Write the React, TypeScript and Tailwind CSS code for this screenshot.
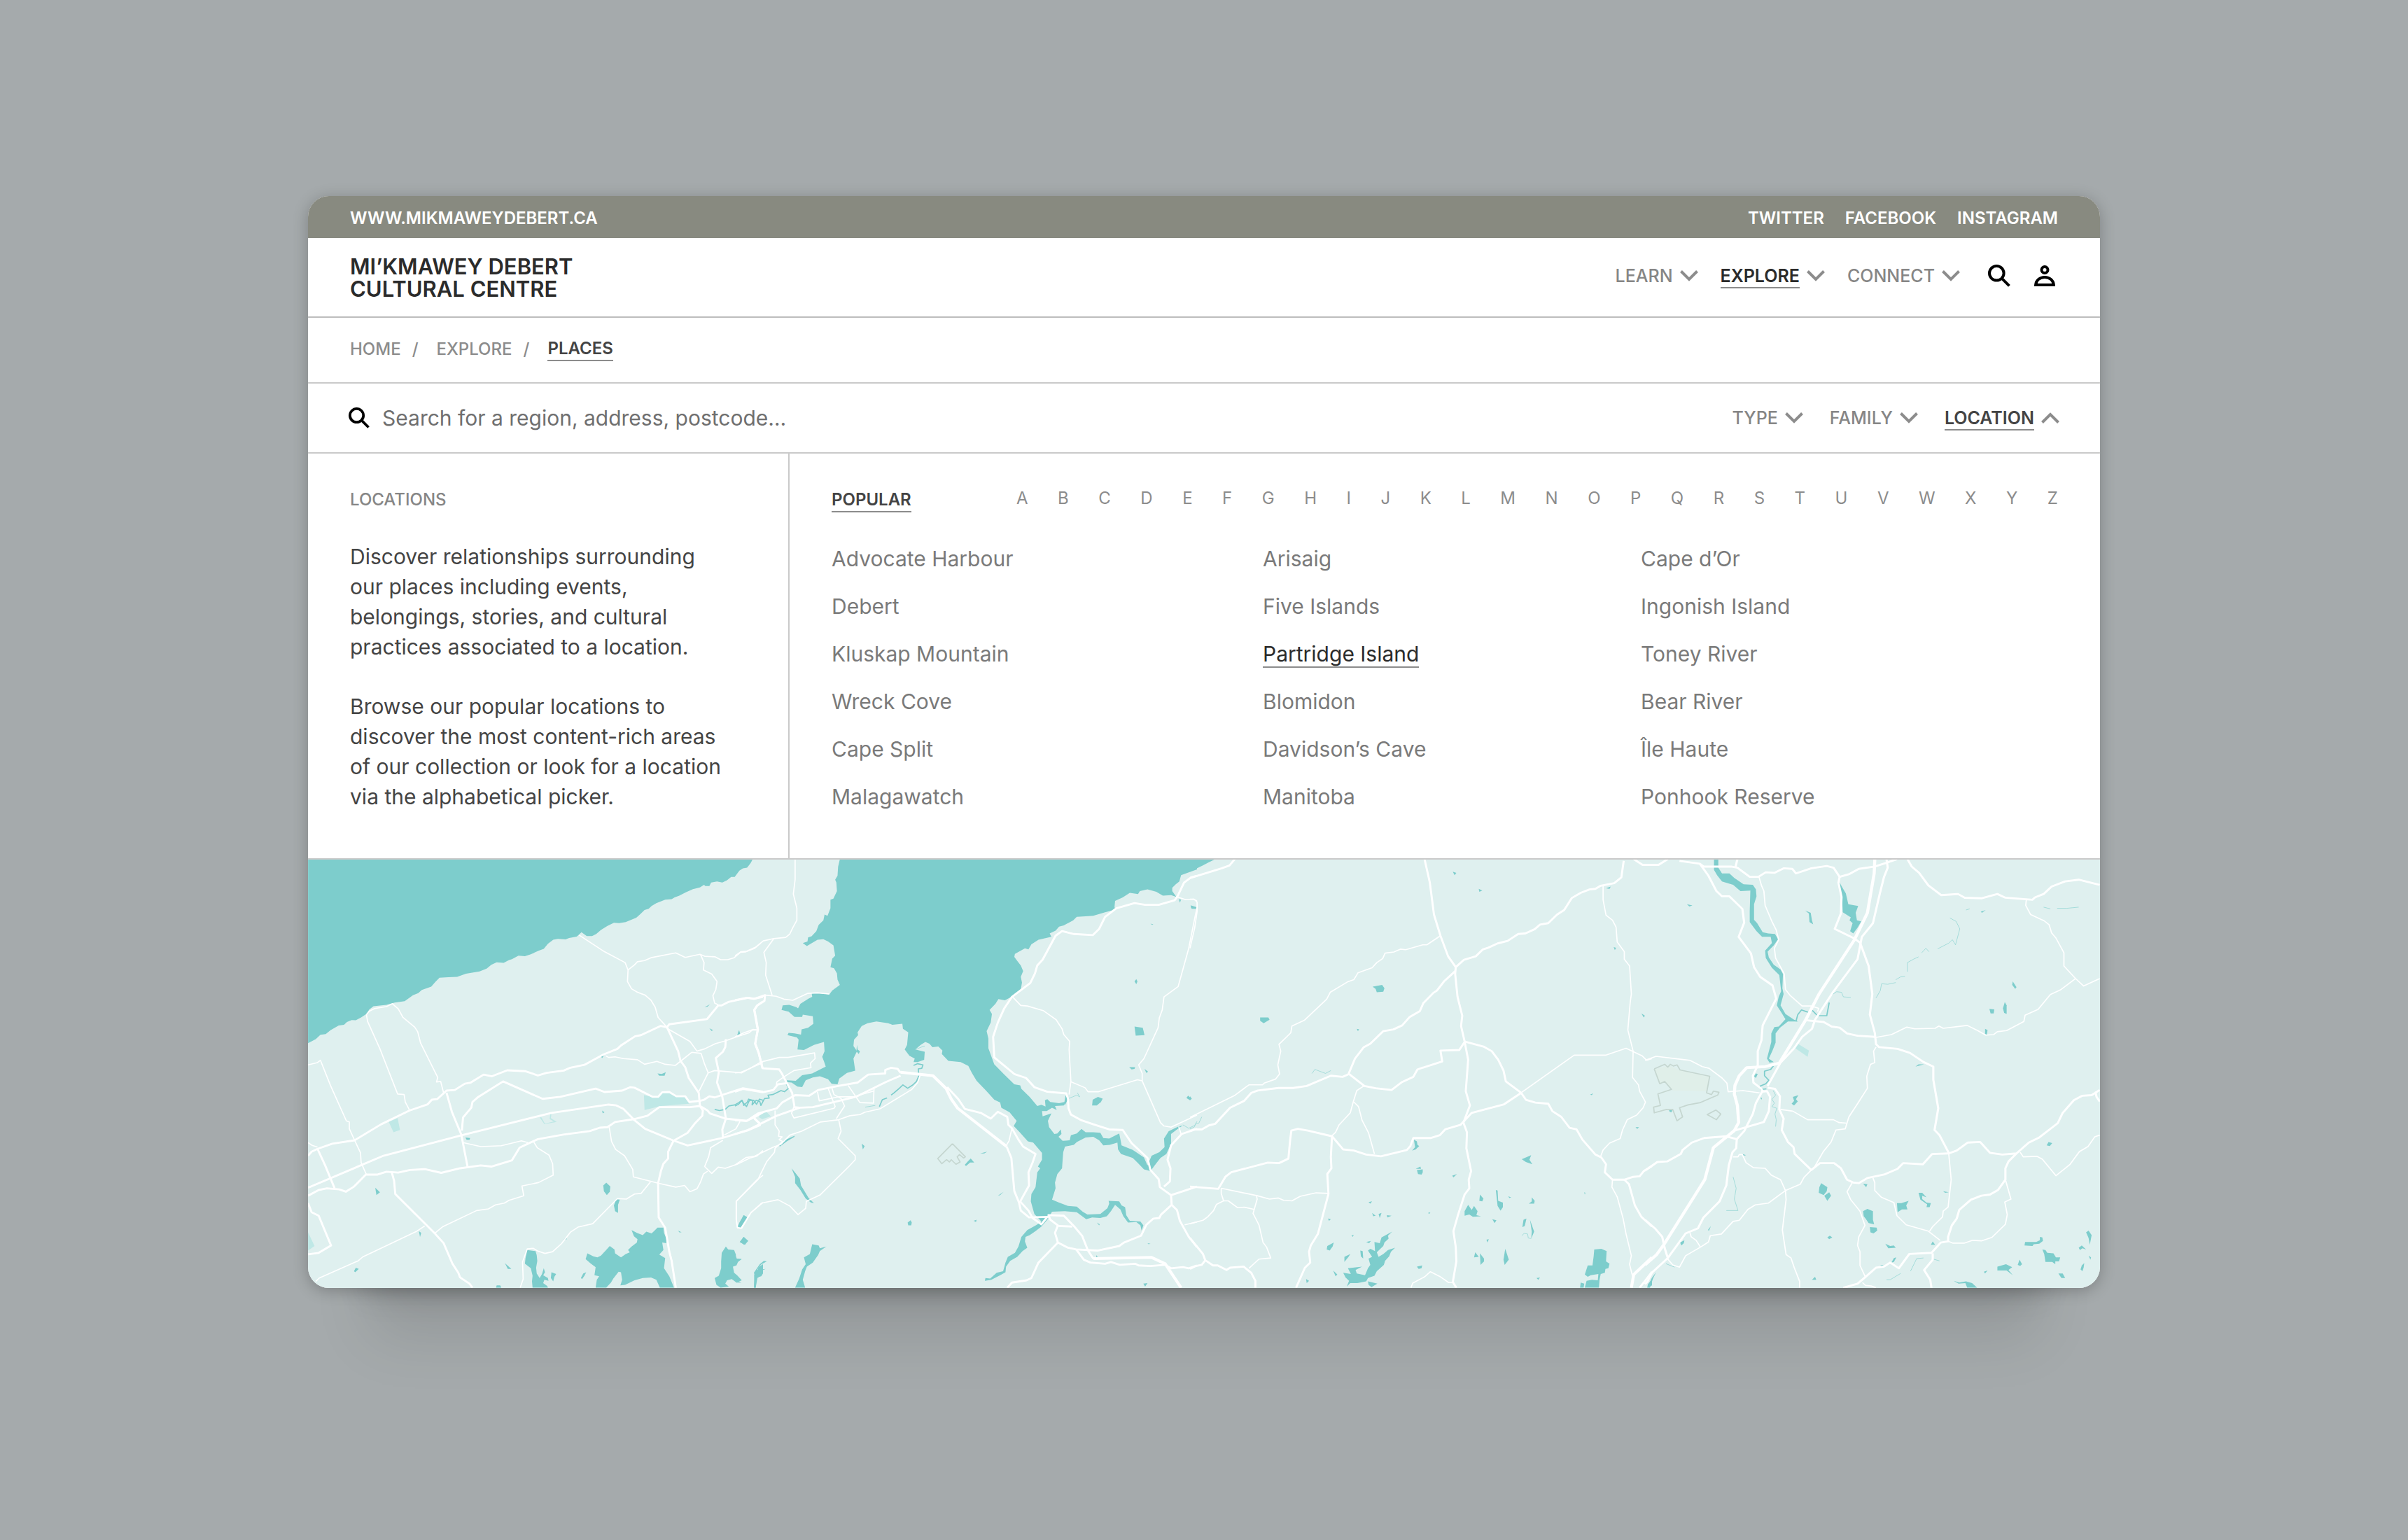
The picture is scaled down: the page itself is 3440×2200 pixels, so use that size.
import React from "react";

type Tile = {
  transform: string;
  water: string[];
  pale?: string[];
  fields?: string[];
  streams?: string[];
  creeks?: string[];
  outlines?: string[];
  thin: string[];
  mid: string[];
  wide?: string[];
};

/* Map sheets, west to east. Each one is drawn in its own survey units. */
const tiles: Tile[] = [
  {
    transform: "translate(430 1220) scale(0.42091 0.40816)",
    water: [
      "24,18 1533,18 1526,32 1514,48 1500,50 1488,58 1472,80 1460,80 1446,92 1430,100 1412,96 1392,100 1386,112 1372,112 1368,108 1354,117 1330,123 1306,134 1284,146 1268,152 1258,158 1236,160 1206,172 1190,182 1180,192 1166,196 1152,210 1138,223 1102,238 1080,242 1062,241 1040,252 1018,266 1002,280 988,287 970,287 952,274 936,289 910,294 898,299 872,297 856,300 838,314 824,332 806,339 780,351 760,358 738,356 716,368 706,371 688,381 664,379 646,388 630,401 606,411 560,419 530,430 500,431 470,433 456,448 442,464 410,476 398,487 380,494 352,515 318,520 290,528 246,533 232,544 222,560 204,572 186,582 172,581 156,588 146,598 128,600 100,617 84,630 66,633 50,648 24,662",
      "1122,1316 1140,1326 1160,1334 1172,1322 1190,1328 1200,1318 1210,1308 1230,1308 1232,1326 1240,1346 1240,1362 1226,1360 1230,1386 1216,1402 1236,1414 1232,1450 1250,1478 1266,1518 1218,1518 1206,1490 1188,1482 1160,1484 1132,1492 1116,1500 1100,1508 1084,1510 1090,1490 1086,1464 1078,1462 1060,1486 1052,1500 1036,1518 1000,1518 1004,1490 1012,1478 996,1474 1000,1446 984,1434 966,1418 972,1398 992,1408 1006,1412 1018,1406 1034,1388 1048,1372 1064,1384 1066,1398 1086,1412 1102,1400 1116,1394 1110,1386 1122,1374 1140,1360 1142,1348 1130,1338",
      "768,1386 796,1390 800,1404 802,1424 798,1448 800,1468 810,1484 818,1470 824,1450 828,1464 822,1474 838,1484 840,1494 826,1490 822,1502 836,1512 838,1518 786,1518 784,1496 786,1476 780,1450 760,1434 762,1414",
      "850,1464 866,1470 860,1480 856,1496 848,1484",
      "1442,1374 1450,1384 1470,1386 1476,1402 1476,1416 1496,1418 1484,1426 1478,1440 1466,1444 1470,1466 1480,1474 1496,1492 1478,1500 1462,1488 1446,1492 1440,1504 1452,1514 1424,1518 1410,1508 1404,1484 1418,1476 1426,1450 1426,1426 1428,1396",
      "1036,1150 1050,1164 1048,1182 1038,1194 1028,1180 1026,1160",
      "1070,1208 1082,1210 1076,1228 1076,1256 1066,1250 1062,1230",
      "1502,1264 1516,1272 1508,1286 1492,1308 1480,1308 1490,1288",
      "1502,1340 1518,1354 1504,1368 1490,1358",
      "1568,1436 1552,1446 1550,1464 1538,1472 1538,1518 1544,1518 1546,1482 1562,1478 1568,1468",
      "252,1168 268,1184 256,1194", "400,1320 408,1326 404,1340", "186,1448 196,1452 184,1464 180,1460",
      "692,1432 714,1452 702,1452", "950,1484 958,1468 968,1464 962,1476 954,1488", "664,1510 676,1510 680,1518 662,1518",
      "1210,768 1224,770 1238,764 1234,776 1216,776", "1370,536 1388,526 1380,534", "1386,610 1398,616 1394,620",
      "1480,636 1486,618 1490,634", "558,992 574,994 572,1000 562,1000", "1022,898 1030,904 1024,908", "1018,708 1028,706 1022,714",
      "890,1352 900,1342 902,1348", "1280,1318 1292,1324 1284,1324",
    ],
    pale: [
      "298,938 328,924 336,966 314,974", "1164,844 1204,852 1230,832 1256,836 1274,850 1300,848 1318,874 1222,882 1166,896", "24,1324 46,1372 24,1388",
      "810,922 826,946 868,938 848,924 850,910 846,910 844,928 858,936 828,944 816,922",
    ],
    streams: ["1404,894 1420,898 1440,894 1452,882 1472,878 1486,870 1496,862 1502,872 1512,884 1522,862 1536,862 1546,876 1556,858 1568,862"],
    thin: [
      "944,284 1030,342 1100,380 1110,406 1108,446 1122,472 1142,484 1168,494 1188,512 1202,536 1212,572 1242,606",
      "1110,406 1132,388 1142,377 1166,373 1188,363 1272,346 1304,362 1354,351 1370,358 1406,360 1424,370 1448,370 1470,363 1492,344 1508,343 1540,330 1560,312",
      "1356,352 1368,380 1366,406 1394,420 1412,446 1408,474 1398,496 1404,522 1416,528",
      "24,738 56,730 66,722 100,810 154,934 164,938 164,962 182,1002 202,1046 204,1080 222,1122",
      "222,562 232,550 250,541 290,534 310,524 330,542 346,572 386,606 396,622 406,662 464,782 460,798 474,796 484,836 490,836",
      "222,562 226,586 268,682 328,840 350,842 354,868 368,896",
      "24,1010 38,1020 56,1026", "550,1010 610,1024 680,1021 748,1004 770,1010",
      "790,1008 802,1028 842,1054 854,1084 856,1124 806,1150 750,1162 756,1196 706,1212 690,1222 660,1228 636,1242 596,1248 482,1304 456,1326",
      "420,1302 390,1322 210,1410 194,1424 62,1484 50,1496",
      "1034,706 1044,712 1066,710 1094,716 1142,720 1166,736 1208,726 1236,736 1270,740 1290,724 1326,694 1358,698 1370,736 1382,766 1404,758 1496,766 1520,752 1568,730",
      "1242,610 1320,656 1344,690 1370,682 1406,664 1440,654 1478,640 1520,626 1534,614 1550,616",
      "1382,766 1350,832", "1490,936 1476,962 1436,984",
      "1046,956 1054,1006 1068,1034 1098,1056 1126,1104 1128,1130 1212,1152 1272,1166 1302,1160 1320,1182 1344,1172 1356,1148 1366,1120 1380,1110",
      "1432,1002 1390,1028 1384,1058 1370,1094 1394,1118 1416,1096 1440,1100 1480,1086 1524,1064 1546,1058 1568,1038",
      "1186,1148 1154,1188 1132,1190 1104,1208 1074,1206 990,1294 940,1306 914,1324 884,1364 854,1392 828,1398 804,1390 788,1380 768,1382 752,1428 754,1488 744,1518",
      "1568,1124 1548,1140 1478,1214 1478,1282 1482,1308 1496,1310 1528,1254 1568,1220",
    ],
    mid: [
      "24,1056 36,1042 56,1032 106,1014 182,1002 272,946 368,898 430,876 444,860 462,858 494,828 522,826 556,804 576,800 620,772 648,778 700,757 760,760 804,775 834,766 892,758 914,748 962,738 1026,702 1074,682 1086,670 1134,638 1154,634 1220,602 1242,606 1250,596 1378,578 1416,530 1428,530 1450,518 1518,503 1536,507 1568,500",
      "24,1168 280,1056 540,986 850,906 1044,877 1070,880 1094,892 1130,930 1168,962 1262,1002 1312,1020 1430,994 1520,966 1560,948",
      "546,968 550,922 578,888 582,868 602,850 686,796 820,857 880,850 1000,821 1030,833 1090,828 1118,816 1132,818 1194,850 1212,850 1226,834 1250,833 1274,848 1304,848 1318,868 1354,864 1368,860 1386,848 1404,852 1500,820 1568,832",
      "24,1196 60,1176 88,1170 130,1174 152,1182 180,1164 220,1122 260,1122 290,1112 330,1115 370,1106 420,1103 476,1116 540,1100 610,1090 646,1094 716,1072 742,1028 770,1014 804,998 890,982 980,970 1014,958 1040,956 1066,938 1130,928 1176,916 1216,886 1320,886 1354,882 1380,898 1388,908 1440,926 1512,934 1538,922 1568,904",
      "1538,924 1560,946",
      "56,1032 82,1090 114,1170", "494,836 512,902 544,982 566,1098",
      "308,1114 316,1144 320,1190 456,1330 484,1362 514,1434 534,1466 540,1482 572,1504 582,1518",
      "1242,606 1280,690 1288,724 1304,746 1316,784 1350,836 1354,882 1364,898 1362,916 1336,944 1312,976 1264,1004 1246,1042 1246,1066 1230,1084 1222,1108 1212,1152 1214,1272 1236,1308 1250,1392 1258,1424 1272,1518",
      "1442,648 1440,676 1432,692 1408,714 1418,764 1412,800 1430,850 1442,926 1430,964 1432,994",
      "1568,516 1548,530 1538,546 1550,614 1542,664 1554,696 1566,750",
      "24,1222 36,1254 60,1266 102,1370 60,1396 24,1401",
    ],
  },
  {
    transform: "translate(1050 1220) scale(0.42091 0.40816)",
    water: [
      "0,18 60,18 46,40 34,48 18,50 4,66 0,72",
      "356,18 1568,18 1568,54 1514,74 1508,96 1496,106 1484,118 1484,130 1498,150 1480,144 1452,146 1430,132 1400,124 1374,130 1368,140 1340,136 1316,152 1290,164 1288,186 1292,194 1256,204 1216,216 1190,218 1160,220 1148,232 1116,250 1100,254 1088,268 1068,278 1074,290 1030,300 1006,316 996,334 984,330 950,350 948,360 958,374 970,390 978,410 970,430 974,450 970,474 942,498 916,512 894,508 884,524 864,546 872,560 868,590 854,620 860,646 860,680 880,736 912,770 948,806 968,810 972,822 1000,850 1026,882 1040,878 1054,884 1052,862 1060,858 1070,868 1100,872 1118,868 1122,846 1132,856 1116,880 1086,882 1092,896 1076,888 1058,900 1042,900 1044,918 1074,908 1062,934 1066,956 1084,980 1094,978 1106,964 1108,980 1098,990 1112,1004 1136,1002 1140,984 1160,978 1176,962 1190,974 1216,974 1240,976 1250,994 1270,996 1304,978 1308,998 1312,1020 1350,1036 1388,1062 1400,1090 1414,1056 1440,1044 1458,1026 1456,996 1472,970 1504,954 1520,950 1500,964 1480,980 1480,1014 1464,1050 1444,1064 1430,1082 1410,1110 1388,1104 1368,1082 1350,1064 1310,1050 1300,1034 1298,1010 1272,1018 1250,1020 1236,1002 1216,990 1190,992 1160,1008 1150,1018 1120,1024 1114,1044 1112,1070 1110,1100 1094,1120 1086,1150 1088,1170 1076,1210 1100,1220 1130,1232 1160,1234 1180,1252 1196,1262 1240,1260 1264,1240 1270,1224 1268,1214 1304,1216 1312,1230 1324,1236 1328,1264 1340,1284 1376,1286 1386,1300 1380,1318 1376,1300 1362,1288 1334,1290 1318,1268 1308,1244 1290,1228 1276,1250 1262,1268 1240,1274 1212,1272 1192,1278 1160,1254 1120,1250 1076,1252 1060,1280 1040,1304 1020,1320 1000,1334 986,1340 984,1356 992,1378 976,1390 958,1410 934,1424 920,1444 918,1464 900,1474 870,1490 848,1494 850,1484 866,1486 888,1466 910,1460 918,1430 926,1410 950,1396 962,1374 972,1340 992,1316 1024,1298 1040,1286 1016,1260 1004,1216 1006,1190 1020,1166 1026,1114 1036,1100 1028,1094 1042,1070 1042,1046 1012,1010 994,1006 968,976 946,952 956,934 932,904 904,888 900,870 880,860 852,828 820,794 804,766 792,742 766,728 724,724 702,700 704,688 690,674 670,676 660,664 646,658 630,668 612,684 644,692 642,720 620,728 606,728 610,716 592,706 576,684 584,668 588,624 570,612 568,594 534,598 520,592 480,586 450,592 430,602 416,624 418,634 404,650 402,672 414,690 402,716 408,758 380,766 354,786 348,806 328,804 316,788 288,778 264,782 240,792 228,816 212,814 192,800 172,798 176,792 206,794 228,774 262,768 308,744 302,726 296,710 304,690 302,658 268,668 234,686 212,684 216,650 210,642 178,634 182,626 202,628 224,632 226,614 248,608 266,594 264,568 230,562 228,570 202,570 182,552 158,546 162,530 184,528 208,536 214,540 222,524 250,506 262,500 260,486 280,486 320,492 330,478 356,458 348,440 346,418 336,400 324,396 330,366 340,356 334,320 316,306 300,298 280,300 244,322 230,312 246,306 248,292 260,288 276,270 284,248 300,232 304,212 314,216 324,190 324,160 334,156 346,130 344,100 340,90 348,76 350,44",
      "1122,846 1128,842 1130,856 1120,880", "414,668 416,684 424,690 420,700 412,690",
      "1356,604 1384,608 1390,634 1360,636", "1214,860 1232,850 1248,856 1242,868 1228,880 1212,880", "1356,446 1362,438 1366,446 1362,456",
      "1338,746 1358,746 1356,752 1346,754", "1390,752 1402,762 1396,766", "1548,180 1566,186 1564,192 1550,192",
      "1532,854 1538,846 1550,856 1544,862", "1506,158 1514,160 1510,170", "192,1100 206,1118 220,1136 224,1160 250,1204 268,1222 258,1220 240,1206 222,1176 204,1152 204,1130",
      "150,1020 172,1000 202,986 202,990 176,1006 152,1024", "430,1014 440,1022 434,1034", "780,1088 790,1076 800,1066 812,1080 798,1080 784,1092",
      "832,1048 856,1042 846,1048", "892,1196 912,1182 900,1194", "586,1290 596,1282 600,1290 598,1300 588,1300", "810,1284 820,1280 818,1288",
      "262,1366 284,1370 288,1380 310,1374 288,1390 282,1404 264,1430 244,1444 238,1460 230,1490 238,1518 204,1518 218,1486 228,1454 240,1436 234,1412 254,1400",
      "108,1426 90,1436 80,1446 76,1456 104,1452 86,1460 90,1474 76,1484 70,1518 64,1518 68,1476 64,1466 84,1436 98,1424",
      "30,1264 42,1272 34,1288 20,1308 8,1308 16,1288", "30,1340 44,1354 34,1368 16,1358", "0,1400 6,1416 22,1418 10,1428 0,1424", "0,1490 22,1500 4,1500",
      "8,636 14,616 18,632", "1386,1504 1400,1502 1392,1514", "1400,1362 1410,1364 1404,1366", "1226,1404 1232,1412 1226,1414", "1228,1290 1238,1296 1236,1300", "1410,244 1420,246 1416,248", "910,576 922,576",
    ],
    pale: ["84,908 104,900 122,918 92,928 82,922"],
    streams: [
      "0,882 12,876 24,862 30,880 42,868 46,858 60,862 58,878 72,862 84,866 88,880 100,856 116,854 112,844 128,842 144,834 156,828 168,832 182,820 172,800",
      "606,740 620,734 638,738 634,750 622,752 624,776 616,796 604,808 586,820 570,808 558,820 540,836 530,844", "516,854 500,860 490,884",
    ],
    creeks: ["442,886 476,880", "1132,856 1146,850 1160,844 1170,850 1162,836", "1520,948 1540,960 1560,950 1568,936", "614,684 632,676 644,672"],
    outlines: ["738,1014 688,1066 702,1084 718,1070 728,1078 734,1070 750,1086 764,1078 754,1060 762,1052 776,1064 782,1060 738,1014"],
    thin: [
      "204,18 204,90 198,140 210,190 210,232 196,258 186,280 172,292 132,296 96,304 70,326 40,340 20,342 0,356",
      "132,296 98,344 106,380 104,424 126,494", "104,494 140,498 166,508 196,512 246,488 280,486 320,490",
      "0,766 20,764 48,752 88,728 150,712 180,712 270,696 272,716 256,732 258,748 200,758 166,780 142,798 140,812",
      "0,640 30,626 56,616 76,616", "200,884 192,908 200,924 336,890 340,884 316,820",
      "280,832 286,864 350,850 400,850 470,830", "328,816 336,842 360,856 372,882 344,926", "384,810 424,870 470,872 472,816",
      "0,1088 38,1062 66,1058 130,1026 156,1016 186,984 226,970 290,938 352,930 390,916 424,912 440,904 492,892 600,824 620,800 628,776",
      "136,898 136,948 150,970 148,988 160,990 150,1000 162,1006 136,1030 134,1044 108,1076 86,1122 78,1140 4,1216 4,1280 8,1308 20,1310 52,1258 90,1222 146,1210 186,1232 214,1262 240,1240 242,1216 288,1194 388,1092 408,1070 408,1056 350,996 360,970 352,930",
      "942,500 970,530 992,532 1046,548 1090,580 1110,612 1116,632 1136,656 1134,684 1140,796 1134,842",
      "1138,796 1188,818 1198,832 1234,832 1366,790 1382,794 1444,940 1456,952 1480,956 1568,914",
      "1382,794 1382,768 1370,738 1388,716 1436,608 1440,574 1450,546 1456,500 1504,464 1540,330 1562,216 1568,190",
      "1500,150 1530,160 1556,158 1568,164", "940,960 930,1004 922,1018", "1506,954 1514,980", "1526,1298 1568,1288",
    ],
    mid: [
      "0,512 40,503 66,507 102,494 100,514 76,530 66,546 78,614 68,664 80,696 94,750 150,754 160,770 176,802 194,836 202,886 220,888 264,886 410,850 512,798 562,776",
      "0,832 28,822 94,834 130,826 146,806 176,802",
      "0,932 40,934 78,908 142,890 160,870 204,844 252,846 282,826 350,812 416,800 452,772 510,768 510,756 530,748 552,752 562,766",
      "0,980 44,966 142,916 220,888", "66,926 84,944",
      "1568,76 1548,82 1524,100 1502,148 1492,162 1438,178 1392,178 1356,172 1294,190 1256,220 1236,262 1214,284 1150,280 1110,270 1088,286 1044,370 1026,390 1018,418 1002,452 940,500 914,540 892,590 876,640 880,712 948,770 988,784 1016,816 1060,832 1124,838 1130,856 1132,890 1140,912 1176,932 1216,946 1270,964 1316,966 1346,1012 1400,1064 1410,1106 1438,1138 1442,1166 1480,1194 1568,1164",
      "1480,1194 1482,1228 1446,1262 1440,1274 1420,1276 1396,1298 1378,1336 1320,1360 1304,1372 1230,1388 1158,1384 1130,1378 1096,1360 1086,1326 1096,1300 1070,1280 1064,1264 1116,1266 1150,1302 1178,1336 1198,1388 1216,1416",
      "1482,1228 1500,1246 1510,1284 1540,1340 1568,1376", "1456,1164 1476,1146 1478,1100 1468,1070 1480,1020 1516,980 1568,962",
      "720,816 758,858 780,892 834,906 868,926 892,902 924,920 928,948 940,960 962,1000 978,1024 1020,1050 1010,1080 996,1114 998,1160 968,1216 996,1248 1010,1274 1040,1296 1060,1270",
      "922,1024 938,1064 948,1180 964,1220 970,1248 998,1272 1066,1270", "1096,1360 1030,1430 1006,1484 990,1492 940,1500 924,1518",
      "1158,1384 1184,1420 1206,1430 1256,1434 1276,1428 1306,1438 1358,1434 1370,1440 1410,1442 1460,1438 1480,1450 1520,1446 1540,1450 1568,1440",
      "1098,1302 1144,1304",
    ],
    wide: ["562,764 672,776 716,820 734,858 756,890 922,1024", "1216,1416 1414,1412 1460,1434 1514,1518"],
  },
  {
    transform: "translate(1700 1220) scale(0.42091 0.40816)",
    water: [
      "0,18 86,18 62,30 44,40 0,62", "2,180 20,186 20,192 4,190", "0,848 6,856 0,862",
      "238,572 266,572 270,580 250,592 238,584", "620,464 652,458 660,470 656,482 634,484 630,472", "892,62 904,66 898,74", "980,122 992,128 982,132",
      "1412,120 1428,114 1424,122", "1438,326 1446,328 1442,336", "1532,558 1544,566 1540,572", "1450,742 1458,746", "1358,842 1368,838 1364,844", "1512,956 1524,956 1518,962",
      "566,612 574,614 570,620", "760,1000 770,1006 772,1018 778,1022 766,1034 754,1038 764,1026", "766,1102 782,1094 784,1102", "770,1106 790,1104 790,1114 786,1122 774,1120",
      "890,1126 906,1120 894,1132", "1126,1068 1158,1054 1152,1070 1162,1086 1140,1078", "932,1250 944,1228 956,1246 964,1232 976,1250 972,1264 988,1268 960,1270 948,1262 932,1266",
      "984,1192 996,1206 992,1216 982,1214", "1038,1176 1044,1178 1046,1214 1062,1220 1062,1236 1054,1248 1044,1232", "1160,1202 1170,1214 1168,1224 1150,1224 1160,1216", "1026,1278 1040,1282 1034,1292",
      "1132,1280 1142,1276 1136,1302 1128,1306", "1154,1280 1168,1322 1158,1346 1160,1322", "1006,1350 1014,1348 1010,1360", "964,1412 968,1394 980,1410", "984,1398 998,1416 998,1426 986,1438",
      "1070,1382 1082,1420 1068,1438 1064,1420", "466,1372 488,1360 484,1374 474,1388 464,1384", "606,1218 618,1216 612,1224", "618,1256 630,1266 622,1268", "640,1260 650,1256 644,1274", "668,1264 684,1266 670,1272",
      "808,1256 816,1254 812,1260", "468,1276 478,1278 472,1284", "486,1458 500,1472 494,1478", "770,1444 788,1440 786,1450 776,1452", "1176,1484 1188,1482 1182,1490", "394,1488 404,1494 396,1502",
      "1338,1184 1342,1186 1340,1192", "1080,1198 1090,1202 1084,1204", "548,1334 556,1334 552,1340", "524,1410 544,1400 538,1410 524,1428", "578,1388 586,1390 588,1416 580,1408", "598,1358 614,1354 608,1362",
      "686,1322 672,1336 674,1346 660,1360 656,1372 634,1394 640,1410 656,1400 672,1386 696,1378 682,1392 676,1408 662,1424 658,1438 634,1460 626,1476 604,1484 598,1496 568,1502 544,1502 532,1514 540,1494 528,1482 520,1466 546,1470 536,1450 584,1444 562,1456 566,1468 594,1474 604,1450 612,1438 606,1416 618,1410 604,1388 612,1382 628,1390 626,1358 644,1362 650,1342",
      "604,1496 636,1504 616,1516 606,1508", "1372,1384 1396,1382 1414,1390 1412,1426 1424,1434 1420,1450 1410,1452 1408,1466 1394,1470 1390,1490 1388,1518 1340,1518 1346,1494 1364,1490 1384,1492 1386,1470 1360,1474 1350,1480 1340,1472 1348,1446 1350,1440 1366,1440 1370,1408",
      "1326,1500 1338,1504 1336,1518 1324,1518", "1568,1488 1554,1506 1552,1518 1568,1510", "672,1168 688,1178", "724,1214 740,1224",
    ],
    creeks: ["414,768 424,754 460,768 478,758", "0,962 14,956 20,944 30,942 40,920", "1126,1336 1134,1328 1146,1330 1148,1344 1158,1346"],
    thin: [
      "0,158 14,158 24,168 24,202 16,258 0,330", "850,286 804,318 790,318 732,335 714,333 692,343 662,347 654,366 634,380 618,398 570,416 556,440 534,448 476,484 464,508 388,582 346,602 342,626 302,666 308,690 298,738 304,770 290,788 252,802 246,808 200,808 150,846 0,922",
      "590,812 566,828 554,868 544,906 506,948 494,974 482,986", "556,868 572,884 584,932 606,976 626,1050",
      "106,1170 228,1196 270,1208 300,1204 318,1212 346,1214 374,1198 428,1186 470,1188", "106,1170 106,1188 114,1214 90,1226 80,1248 60,1270 44,1282 0,1294", "114,1214 130,1214 162,1238 184,1236 218,1244 228,1208 226,1198",
      "218,1244 214,1258 234,1298 248,1360 260,1376 274,1414 234,1418 200,1450", "1402,112 1402,160 1412,214 1434,232 1446,256 1450,308 1474,342 1474,368 1492,392 1498,490 1494,520 1486,616 1504,690 1502,782 1522,808 1526,830 1546,868 1538,888 1516,914 1484,930 1468,966 1460,996 1424,1012 1402,1036 1394,1058",
      "1126,834 1304,704 1412,704 1480,680 1534,706 1550,722 1568,716", "1434,1140 1432,1166 1450,1200 1470,1276 1480,1330 1498,1406 1492,1436 1502,1478", "750,1518 756,1502 796,1480 816,1462 850,1480 878,1500 894,1500",
    ],
    mid: [
      "0,84 108,50 134,40 152,18", "796,18 814,100 828,212 850,286 876,358 902,396 900,420 908,500 924,566 920,602 932,656 944,720 936,830 950,880 928,940 940,974 938,1030 954,1110 946,1140 948,1170 932,1192 910,1262 894,1320 902,1376 904,1426 892,1498 904,1518",
      "902,396 930,370 970,358 994,334 1012,328 1044,313 1078,304 1114,280 1138,278 1170,263 1188,247 1216,242 1246,212 1270,196 1296,154 1326,136 1356,124 1376,122 1394,111 1440,102 1464,82 1472,24",
      "900,410 862,446 838,478 826,486 792,522 780,550 746,570 720,600 690,614 656,620 612,664 590,676 560,716 538,770", "0,970 14,964 40,964 64,950 86,944 136,888 184,864 208,836 230,828 300,819 350,819 396,812 478,776 518,780 540,770 592,812 630,820 684,826 720,798 758,780 772,754 856,726 850,688 914,686 932,658",
      "932,656 996,674 1024,690 1046,720 1064,758 1072,796 1124,836 1140,860 1172,870 1216,874 1230,900 1260,920 1288,958 1312,964 1332,1000 1376,1052 1396,1062 1412,1086 1408,1114 1434,1140 1474,1140 1504,1130 1526,1128 1540,1110 1568,1092",
      "1124,836 1066,876 956,906 918,948 866,964 848,984 818,994 758,994 748,1022 736,1036 648,1058 598,1052 556,1038 520,1034 482,988 400,968 366,962 344,968 340,1000 334,1066 302,1082 264,1080 140,1114 120,1130 96,1172 0,1164",
      "482,988 478,1060 480,1100 466,1120 470,1190 434,1330 410,1370 404,1392 408,1430 390,1448 360,1518", "1474,1140 1490,1156 1510,1230 1532,1270 1568,1304",
      "0,1344 44,1400 52,1422 78,1440 94,1440 124,1456 136,1448 182,1444 208,1466 222,1494 222,1518", "0,1452 20,1442 40,1438 52,1422", "1506,18 1536,38 1568,38",
      "1568,1462 1540,1500 1526,1518",
    ],
    wide: ["1568,1412 1506,1472 1498,1518"],
  },
  {
    transform: "translate(2350 1220) scale(0.44005 0.40816)",
    water: [
      "224,18 238,18 238,48 250,68 274,68 290,84 320,106 350,108 360,124 362,148 354,176 354,230 364,242 382,274 400,278 422,280 432,298 418,320 398,342 402,362 418,388 440,404 448,420 446,470 450,490 440,530 456,560 484,580 498,586 464,586 438,608 424,628 424,660 414,688 402,716 418,728 404,730 396,716 410,658 410,628 420,606 434,604 456,578 442,554 428,530 434,500 442,480 436,424 412,398 392,364 390,338 412,312 408,290 380,290 362,270 340,238 340,200 342,128 310,130 286,108 250,96 234,74 224,56",
      "630,96 640,116 652,138 660,176 692,182 684,206 688,232 702,236 690,258 676,278 666,270 674,242 664,232 668,222 642,204 640,160 630,120", "520,198 538,206 542,232 546,246 534,238 532,208", "136,176 154,180 144,184", "1090,202 1106,196 1094,206",
      "1194,446 1206,466 1202,472 1192,458", "1168,518 1174,530 1174,560 1166,556 1162,540", "1118,542 1134,544 1132,558 1122,558", "1104,612 1112,616 1110,632 1104,630", "878,744 888,736 906,736", "1310,1008 1322,1012 1314,1022 1304,1020",
      "354,778 360,768 366,770 360,784", "480,850 498,844 490,858 496,866 484,880 476,874 484,864", "374,852 380,854 378,860", "78,896 88,896 86,904 80,902",
      "572,1152 592,1166 590,1180 580,1194 564,1186 566,1166", "582,1196 598,1184 604,1196 592,1214", "708,1154 722,1156 718,1166", "818,1222 832,1222 856,1214 848,1230 852,1244 834,1244 820,1254", "888,1186 900,1186 914,1202 900,1196 900,1208 914,1220 928,1222 924,1236 914,1236 916,1226 894,1210",
      "968,1180 986,1184 974,1186", "1004,1184 1016,1184", "708,1250 722,1242 740,1250 740,1280 744,1296 726,1292 716,1276 710,1268", "730,1306 752,1308 754,1318 742,1328 732,1324", "592,1342 600,1336 608,1342 598,1348",
      "780,1364 796,1372 808,1370 814,1378 790,1380", "808,1414 816,1412 808,1428 800,1430", "928,1368 934,1356 942,1368", "542,1490 552,1480 556,1490", "114,1360 128,1352 126,1362 118,1370", "204,1316 214,1302 208,1318", "764,1440 774,1438 768,1444",
      "1234,1358 1270,1358 1282,1352 1282,1340 1290,1342 1292,1354 1280,1364 1262,1366 1258,1372 1232,1370", "1290,1384 1300,1386 1306,1396 1326,1398 1334,1412 1348,1412 1344,1426 1332,1426 1332,1436 1322,1428 1300,1428 1296,1400",
      "1432,1324 1440,1318 1450,1334 1444,1368 1440,1344", "1408,1378 1418,1370 1432,1384 1420,1380 1412,1386", "1440,1406 1448,1412 1446,1420", "1418,1440 1426,1432 1424,1448 1420,1460 1414,1454", "1342,1468 1356,1468 1364,1484 1352,1484",
      "1144,1444 1172,1436 1192,1446 1180,1456 1194,1474 1174,1458 1144,1458", "1210,1438 1216,1420 1224,1436 1218,1442", "1100,1462 1112,1458 1104,1468", "1002,1494 1020,1500 1042,1496 1062,1502 1078,1518 1046,1518 1040,1502 1018,1504", "1296,1116 1302,1120",
      "316,1050 328,1054 320,1056", "36,1464 22,1484 8,1518 16,1518 26,1486",
    ],
    pale: ["496,664 532,688 528,710 488,680"],
    fields: ["30,754 78,740 110,756 208,780 202,830 90,828 64,796 48,804"],
    streams: [
      "490,586 496,562 508,546 530,554 544,548 560,566 590,566 598,520", "418,740 408,754 388,760 388,776 402,792 392,804 374,812 376,824 394,822",
    ],
    creeks: [
      "600,498 622,482 638,484 644,500 668,502", "416,828 424,844 412,858 420,872 412,884 428,890 422,910 426,930 424,954",
      "990,224 1010,236 1022,262 1008,318 998,300 986,312 950,332", "888,360 872,368 852,380 852,412", "844,428 830,430 814,440", "814,450 788,456 768,454 764,478 750,504", "898,346 912,330 922,342",
      "1294,186 1316,192", "1338,190 1370,190 1408,186", "1042,196 1054,192", "784,1490 796,1490 830,1468", "862,1460 882,1416 904,1414", "286,1130 296,1170 290,1208 302,1248 264,1248", "936,1418 956,1424", "68,1434 96,1446",
    ],
    outlines: [
      "30,752 64,736 74,746 82,736 92,742 104,738 114,756 210,778 200,836 216,842 222,830 240,834 236,844 222,850 180,870 140,878 112,888 122,920 104,934 90,894 70,894 30,906 28,886 50,880 42,840 86,824 64,796 48,804 30,752",
      "230,896 246,910 232,930 202,912 230,896",
    ],
    thin: [
      "370,80 378,110 386,130 390,180 412,236 426,266 434,300 420,330 424,364 452,420 456,474 472,496 510,532 540,532 564,540 560,552", "1238,160 1236,180 1252,212 1296,234 1312,248 1320,276 1334,294 1360,346 1360,392 1398,436 1424,462 1476,436",
      "1398,436 1348,476 1316,492 1276,544 1234,564 1230,586 1174,618 1144,622 1132,632 1106,634 1080,618 1046,600 968,610 954,602 942,610 876,612 850,606 800,632 750,642", "750,676 742,690 746,730 732,736 720,778 722,820 690,874 662,920 650,962 620,966 604,1008 580,1040 548,1100",
      "440,894 480,900 528,930 612,930 630,940 654,942", "0,722 36,708 128,720 146,722 186,744 208,750 250,784 266,802 270,832 318,828 372,836", "286,1060 302,1060 306,1052 316,1052 328,1080 352,1098 390,1100 410,1124 440,1140 456,1178 504,1156 516,1132 540,1106",
      "456,1178 400,1222 358,1228 334,1244 306,1282 286,1286 248,1330 212,1336 206,1358 180,1376 132,1406 112,1446 90,1438 74,1418", "146,1326 150,1340 166,1352 180,1376", "456,1178 458,1210 446,1316 458,1402 474,1414 484,1446 502,1496 502,1518",
      "672,1152 656,1182 668,1210 698,1250 714,1300 694,1340 690,1370 698,1392 698,1440 716,1482", "740,1134 746,1150 746,1178 768,1202 808,1220 818,1266 848,1298 920,1320 958,1352", "986,1048 994,1140 984,1236 968,1250 966,1270 934,1304 924,1320",
      "986,1356 1000,1362 1036,1362 1064,1352 1092,1354 1126,1342 1170,1296 1176,1262 1168,1218 1188,1208 1170,1140", "1218,1044 1228,1060 1272,1058 1290,1068 1334,1126 1380,1086 1410,1042 1438,1024 1460,990 1476,984", "706,1500 716,1510 734,1512 750,1518",
    ],
    mid: [
      "0,38 44,38 74,18", "112,24 178,34 190,44 280,44 300,48 340,80 368,80 392,64 420,66 450,50 478,52 490,68 540,50 590,42 612,48 632,80 664,70 694,52 746,44 780,32 818,18", "300,18 294,44", "178,34 206,76 232,130 250,148 274,148 316,192 322,240 304,290 344,348 354,396 374,430 414,460 426,506 382,600 378,652 366,690 366,740 350,776 352,800 376,820 384,832",
      "632,80 628,100 638,150 636,208 616,262 680,296 698,310 726,392 738,490 730,562 746,626 750,666 760,676 820,682 860,696 904,728 936,744 936,790 952,890 940,966 956,984 986,1046", "526,582 580,588 606,604 632,608 656,628 690,636 748,640",
      "852,18 866,44 890,66 920,110 962,144 1016,140 1038,153 1092,155 1144,140 1170,153 1258,160 1266,152 1294,140 1320,114 1364,96 1408,90 1476,108", "784,18 788,48 776,80 762,140 740,242 704,290 690,368 610,484 552,580 542,612 510,640 484,680 440,730 398,812",
      "398,818 422,822 438,848 436,894 450,926 444,966 464,1008 482,1026 486,1050 540,1106 568,1082 614,1082 636,1100 656,1140 676,1150 694,1152 722,1134 776,1122 820,1102 838,1082 902,1086 932,1050 986,1048 1012,1038 1048,1010 1088,1008 1120,1046 1160,1052 1206,1048 1246,1010 1280,992 1340,942 1356,906 1392,862 1420,846 1450,844 1476,826",
      "1462,832 1466,850 1476,866", "1206,1048 1180,1076 1170,1100 1170,1140 1146,1176 1120,1192 1092,1196 1058,1210 1020,1246 1012,1276 996,1300 984,1340 984,1356 960,1360 930,1396 858,1400 824,1450 796,1430 776,1444 750,1448 714,1482 690,1504 644,1518",
      "934,1398 934,1420 906,1456 926,1490 930,1518", "0,1108 40,1078 72,1076 116,1050 122,1036 152,1010 192,994 264,988 298,998 322,970 350,910 360,872 380,832 396,830 406,850 402,900 386,938 290,968",
      "298,998 296,1030 284,1044 272,1090 264,1160 242,1216 190,1272 172,1310 132,1328 74,1414 22,1466 8,1496 0,1506", "0,1280 32,1310 56,1340 64,1380 74,1414",
    ],
    wide: ["746,18 744,68 722,206 680,300 564,492 520,584 436,732 390,744 330,748 306,776 292,810 290,840 300,880 304,940 290,968 222,1028 194,1140 62,1366 38,1402 0,1438"],
  },
];

function LocationMap() {
  return (
    <svg
      viewBox="440 1228 2560 612"
      preserveAspectRatio="xMidYMid slice"
      className="block w-full bg-[#dff0ef]"
      role="img"
      aria-label="Map of locations"
      fill="none"
      strokeLinejoin="round"
    >
      {tiles.map((t) => (
        <g key={t.transform} transform={t.transform}>
          {t.fields?.map((d) => <polygon key={d} points={d} fill="#e0efe9" />)}
          {t.pale?.map((d) => <polygon key={d} points={d} fill="#bfe8e6" />)}
          {t.water.map((d) => <polygon key={d} points={d} fill="#7dcdcc" />)}
          {t.streams?.map((d) => <polyline key={d} points={d} stroke="#7dcdcc" strokeWidth="4" />)}
          {t.creeks?.map((d) => <polyline key={d} points={d} stroke="#9ad8d6" strokeWidth="2" />)}
          {t.outlines?.map((d) => <polyline key={d} points={d} stroke="#c5d6d0" strokeWidth="4" />)}
        </g>
      ))}
      {tiles.map((t) => (
        <g key={t.transform} transform={t.transform} stroke="#ffffff">
          {t.thin.map((d) => <polyline key={d} points={d} strokeWidth="4" />)}
          {t.mid.map((d) => <polyline key={d} points={d} strokeWidth="7" />)}
          {t.wide?.map((d) => <polyline key={d} points={d} strokeWidth="10" />)}
        </g>
      ))}
    </svg>
  );
}

function SearchIcon({ className }: { className: string }) {
  return (
    <svg viewBox="0 0 32 32" className={className} fill="none" stroke="#000" strokeWidth="4" aria-hidden="true">
      <circle cx="12.3" cy="12.3" r="10.3" />
      <path d="M19.4 19.4 30.4 30.4" />
    </svg>
  );
}

function PersonIcon() {
  return (
    <svg viewBox="0 0 30 30" className="size-[30px]" fill="none" stroke="#000" strokeWidth="4" aria-hidden="true">
      <circle cx="15" cy="6.5" r="4.5" />
      <path d="M2.1 28C2.6 21.500 8 17 15 17s12.400 4.500 12.900 11Z" />
    </svg>
  );
}

function Chevron({ up = false }: { up?: boolean }) {
  return (
    <svg viewBox="0 0 26 16" className="h-4 w-[26px]" fill="none" stroke="#8c8c8c" strokeWidth="4" aria-hidden="true">
      <path d={up ? "M1.500 14.500 13 3 24.500 14.500" : "M1.500 1.500 13 13 24.500 1.500"} />
    </svg>
  );
}

function MenuButton({ label, active = false, up = false, tone }: { label: string; active?: boolean; up?: boolean; tone: string }) {
  return (
    <button type="button" aria-expanded={up} className="flex items-center gap-2.5">
      <span className={active ? `border-b-2 border-[#8c8c8c] pt-0.5 ${tone}` : "border-b-2 border-transparent pt-0.5 text-[#868686]"}>{label}</span>
      <Chevron up={up} />
    </button>
  );
}

const columns = [
  ["Advocate Harbour", "Debert", "Kluskap Mountain", "Wreck Cove", "Cape Split", "Malagawatch"],
  ["Arisaig", "Five Islands", "Partridge Island", "Blomidon", "Davidson’s Cave", "Manitoba"],
  ["Cape d’Or", "Ingonish Island", "Toney River", "Bear River", "Île Haute", "Ponhook Reserve"],
];

export default function App() {
  return (
    <div className="min-h-screen bg-[#a5aaac] px-[440px] py-[280px] font-['Inter',sans-serif] text-[#444444]">
      <main className="overflow-hidden rounded-[30px] bg-white shadow-[0_4px_22px_rgba(0,0,0,0.24),0_90px_40px_-80px_rgba(0,0,0,0.14),0_160px_80px_-90px_rgba(0,0,0,0.1)]">
        <div className="flex h-15 items-center justify-between bg-[#888a80] px-[60px] pt-1 text-[24px] font-semibold text-white">
          <a href="#site">WWW.MIKMAWEYDEBERT.CA</a>
          <nav aria-label="Social" className="flex gap-[30px]">
            <a href="#twitter">TWITTER</a>
            <a href="#facebook">FACEBOOK</a>
            <a href="#instagram">INSTAGRAM</a>
          </nav>
        </div>

        <header className="flex h-[114px] items-center justify-between border-b-2 border-[#bdbdbd] pr-16 pb-1 pl-[60px]">
          <a href="#home" className="pt-1.5 text-[31px] leading-8 font-semibold text-[#2b2b2b]">
            MI’KMAWEY DEBERT<br />CULTURAL CENTRE
          </a>
          <nav aria-label="Main" className="flex items-center gap-8 text-[25px] leading-8 font-medium">
            <MenuButton label="LEARN" tone="text-[#2b2b2b]" />
            <MenuButton label="EXPLORE" active tone="font-semibold text-[#2b2b2b]" />
            <MenuButton label="CONNECT" tone="text-[#2b2b2b]" />
            <div className="flex gap-[34px] pl-2">
              <button type="button" aria-label="Search"><SearchIcon className="size-8" /></button>
              <button type="button" aria-label="Account"><PersonIcon /></button>
            </div>
          </nav>
        </header>

        <nav aria-label="Breadcrumb" className="flex h-[94px] items-center border-b-2 border-[#cacaca] px-[60px] pb-0.5 text-[24px] leading-8 font-medium text-[#8c8c8c]">
          <a href="#home">HOME</a>
          <span className="mr-[26px] ml-4">/</span>
          <a href="#explore">EXPLORE</a>
          <span className="mr-[26px] ml-4">/</span>
          <a href="#places" aria-current="page" className="border-b-2 border-[#8c8c8c] font-semibold text-[#444444]">PLACES</a>
        </nav>

        <div className="flex h-[100px] items-center justify-between border-b-2 border-[#cacaca] px-[58px]">
          <label className="flex flex-1 items-center gap-[18px]">
            <SearchIcon className="size-[30px]" />
            <input
              type="search"
              aria-label="Search locations"
              placeholder="Search for a region, address, postcode…"
              className="flex-1 text-[30px] outline-none placeholder:text-[#6f6f6f]"
            />
          </label>
          <div className="flex items-center gap-[38px] text-[25px] leading-8 font-medium">
            <MenuButton label="TYPE" tone="text-[#444444]" />
            <MenuButton label="FAMILY" tone="text-[#444444]" />
            <MenuButton label="LOCATION" active up tone="font-semibold text-[#444444]" />
          </div>
        </div>

        <div className="flex border-b-2 border-[#cacaca]">
          <section className="w-[688px] border-r-2 border-[#cacaca] pt-[50px] pr-10 pb-[66px] pl-[60px]">
            <h2 className="text-[24px] leading-8 font-medium text-[#868686]">LOCATIONS</h2>
            <div className="mt-11 text-[30px] leading-[43px] text-[#444444]">
              <p>
                Discover relationships surrounding<br />our places including events,<br />belongings, stories, and cultural<br />practices associated to a location.
              </p>
              <p className="mt-[42px]">
                Browse our popular locations to<br />discover the most content-rich areas<br />of our collection or look for a location<br />via the alphabetical picker.
              </p>
            </div>
          </section>

          <section className="flex-1 px-[60px] pt-[50px]">
            <div className="flex items-start">
              <div className="w-[264px]">
                <button type="button" className="block border-b-2 border-[#8c8c8c] text-[24px] leading-8 font-semibold text-[#444444]">POPULAR</button>
              </div>
              <div className="flex flex-1 justify-between text-[24px] leading-7 text-[#8c8c8c]">
                {"ABCDEFGHIJKLMNOPQRSTUVWXYZ".split("").map((l) => (
                  <button type="button" key={l}>{l}</button>
                ))}
              </div>
            </div>
            <div className="mt-12 grid grid-cols-[616fr_540fr_596fr] text-[30px] leading-9 text-[#7a7a7a]">
              {columns.map((col) => (
                <ul key={col[0]} className="space-y-8">
                  {col.map((name) => (
                    <li key={name} className="h-9">
                      <a
                        href="#location"
                        className={name === "Partridge Island" ? "inline-block border-b-2 border-[#8c8c8c] text-[#2b2b2b]" : "inline-block"}
                      >
                        {name}
                      </a>
                    </li>
                  ))}
                </ul>
              ))}
            </div>
          </section>
        </div>

        <LocationMap />
      </main>
    </div>
  );
}
